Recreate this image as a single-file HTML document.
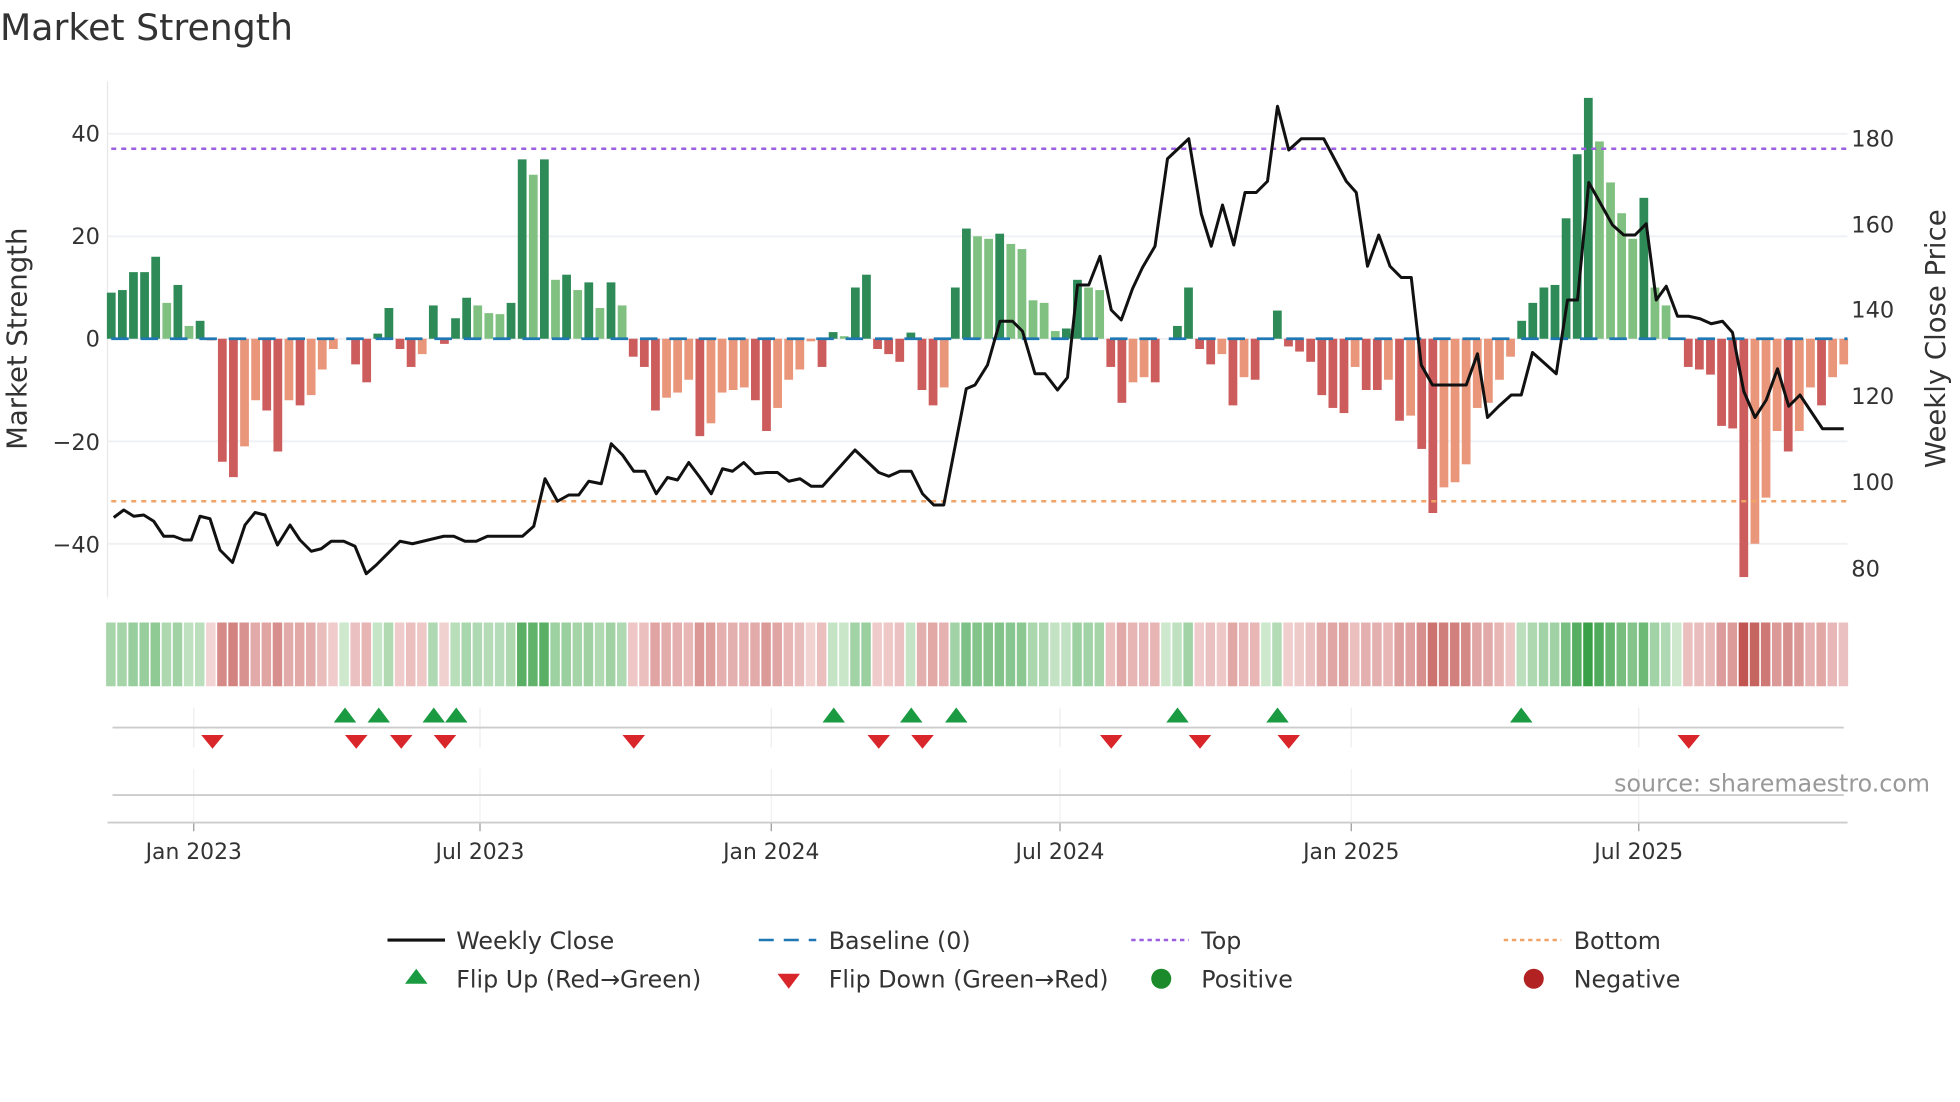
<!DOCTYPE html>
<html><head><meta charset="utf-8"><style>
html,body{margin:0;padding:0;background:#fff;}
svg{display:block;font-family:"DejaVu Sans","Liberation Sans",sans-serif;}
</style></head><body>
<svg id="s" width="1960" height="1102" viewBox="0 0 1568 881.6" xmlns="http://www.w3.org/2000/svg">
<rect width="1568" height="882" fill="#fff"/>
<text x="0" y="32" font-size="29" fill="#333">Market Strength</text>
<g id="grid"></g>
<g id="heat"></g>
<g id="bars"></g>
<g id="lines"></g>
<g id="marks"></g>
<g font-size="18" fill="#333" text-anchor="end">
<text x="80" y="113">40</text><text x="80" y="195">20</text><text x="80" y="277">0</text>
<text x="80" y="360">−20</text><text x="80" y="442">−40</text>
</g>
<g font-size="18" fill="#333">
<text x="1481" y="117">180</text><text x="1481" y="186">160</text><text x="1481" y="254">140</text>
<text x="1481" y="323">120</text><text x="1481" y="392">100</text><text x="1481" y="461">80</text>
</g>
<text transform="translate(21,271) rotate(-90)" font-size="22" fill="#333" text-anchor="middle">Market Strength</text>
<text transform="translate(1556,271) rotate(-90)" font-size="22" fill="#333" text-anchor="middle">Weekly Close Price</text>
<g font-size="17.5" fill="#333" text-anchor="middle">
<text x="155" y="687">Jan 2023</text><text x="384" y="687">Jul 2023</text><text x="617" y="687">Jan 2024</text>
<text x="848" y="687">Jul 2024</text><text x="1081" y="687">Jan 2025</text><text x="1311" y="687">Jul 2025</text>
</g>
<text x="1544" y="633" font-size="19" fill="#999" text-anchor="end">source: sharemaestro.com</text>
<g font-size="19" fill="#333">
<line x1="310" y1="752" x2="356" y2="752" stroke="#111" stroke-width="2.5"/>
<text x="365" y="759">Weekly Close</text>
<line x1="607" y1="752" x2="653" y2="752" stroke="#1f77b4" stroke-width="2" stroke-dasharray="12,8"/>
<text x="663" y="759">Baseline (0)</text>
<line x1="905" y1="752" x2="951" y2="752" stroke="#9c5fe0" stroke-width="2" stroke-dasharray="3.5,3"/>
<text x="961" y="759">Top</text>
<line x1="1203" y1="752" x2="1249" y2="752" stroke="#f0a468" stroke-width="2" stroke-dasharray="3.5,3"/>
<text x="1259" y="759">Bottom</text>
<polygon points="333,775 342,787 324,787" fill="#1a9a41"/>
<text x="365" y="790">Flip Up (Red→Green)</text>
<polygon points="622,779 640,779 631,791" fill="#d9262a"/>
<text x="663" y="790">Flip Down (Green→Red)</text>
<circle cx="929" cy="783" r="8" fill="#1a8a2a"/>
<text x="961" y="790">Positive</text>
<circle cx="1227" cy="783" r="8" fill="#b22222"/>
<text x="1259" y="790">Negative</text>
</g>
</svg>
<script>
var NS="http://www.w3.org/2000/svg";
function el(p,t,a){var e=document.createElementNS(NS,t);for(var k in a)e.setAttribute(k,a[k]);document.getElementById(p).appendChild(e);return e;}
var V=[9,9.5,13,13,16,7,10.5,2.5,3.5,-0.3,-24,-27,-21,-12,-14,-22,-12,-13,-11,-6,-2,0,-5,-8.5,1,6,-2,-5.5,-3,6.5,-1,4,8,6.5,5,4.8,7,35,32,35,11.5,12.5,9.5,11,6,11,6.5,-3.5,-5.5,-14,-11.5,-10.5,-8,-19,-16.5,-10.5,-10,-9.5,-12,-18,-13.5,-8,-6,-0.5,-5.5,1.3,0.5,10,12.5,-2,-3,-4.5,1.2,-10,-13,-9.5,10,21.5,20,19.5,20.5,18.5,17.5,7.5,7,1.5,2,11.5,10,9.5,-5.5,-12.5,-8.5,-7.5,-8.5,0,2.5,10,-2,-5,-3,-13,-7.5,-8,0,5.5,-1.5,-2.5,-4.5,-11,-13.5,-14.5,-5.5,-10,-10,-8,-16,-15,-21.5,-34,-29,-28,-24.5,-13.5,-12.5,-8,-3.5,3.5,7,10,10.5,23.5,36,47,38.5,30.5,24.5,19.5,27.5,10,6.5,0,-5.5,-6,-7,-17,-17.5,-46.5,-40,-31,-18,-22,-18,-9.5,-13,-7.5,-5];
var x0=89,dx=(1475-89)/(V.length-1),Y=function(v){return 271-v*4.1;};
el("grid","line",{x1:86,y1:65,x2:86,y2:478,stroke:"#e8e8e8","stroke-width":1});
[40,20,0,-20,-40].forEach(function(v){el("grid","line",{x1:86,y1:Y(v),x2:1478,y2:Y(v),stroke:"#eef0f4","stroke-width":1.5});});
[155,384,617,848,1081,1311].forEach(function(x){
 el("grid","line",{x1:x,y1:566,x2:x,y2:598,stroke:"#eee","stroke-width":1});
 el("grid","line",{x1:x,y1:615,x2:x,y2:657,stroke:"#f0f0f0","stroke-width":1});
 el("grid","line",{x1:x,y1:658,x2:x,y2:665,stroke:"#999","stroke-width":1});
});
el("grid","line",{x1:90,y1:582,x2:1475,y2:582,stroke:"#ccc","stroke-width":1.5});
el("grid","line",{x1:90,y1:636,x2:1475,y2:636,stroke:"#ccc","stroke-width":1.5});
el("grid","line",{x1:86,y1:658,x2:1478,y2:658,stroke:"#ccc","stroke-width":1.5});
function mix(a,b,t){return "rgb("+a.map(function(c,i){return Math.round(c+(b[i]-c)*t);}).join(",")+")";}
V.forEach(function(v,i){
 var x=x0+i*dx,prev=i?V[i-1]:0,col;
 if(v>=0){col=(v>=prev)?"#2e8b57":"#80c080";}else{col=(v<=prev)?"#cd5c5c":"#e9967a";}
 var y=Y(Math.max(v,0)),h=Math.abs(v)*4.1;
 if(h>0.3)el("bars","rect",{x:x-3.5,y:y,width:7,height:h,fill:col});
 var t=Math.min(Math.abs(v)/47,1),hc;
 if(v>=0)hc=mix([205,232,205],[58,160,72],Math.pow(t,0.8));else hc=mix([243,214,214],[192,84,80],Math.pow(t,0.8));
 el("heat","rect",{x:x-4.1,y:498,width:7.6,height:51,fill:hc});
});
el("lines","line",{x1:89,y1:271,x2:1478,y2:271,stroke:"#1f77b4","stroke-width":2.2,"stroke-dasharray":"14,9.5"});
el("lines","line",{x1:89,y1:119,x2:1478,y2:119,stroke:"#9c5fe0","stroke-width":2,"stroke-dasharray":"4,4"});
el("lines","line",{x1:89,y1:401,x2:1478,y2:401,stroke:"#f0a468","stroke-width":2,"stroke-dasharray":"4,4"});
var P="91,414 99,408 107,413 115,412 123,417 131,429 139,429 147,432 153,432 160,413 168,415 176,440 186,450 196,420 204,410 212,412 222,436 232,420 240,432 249,441 257,439 265,433 275,433 284,437 293,459 301,452 320,433 330,435 355,429 363,429 372,433 381,433 390,429 418,429 427,421 436,383 446,401 455,396 463,396 471,385 481,387 489,355 498,364 507,377 516,377 525,395 534,382 542,384 551,370 560,382 569,395 578,375 586,377 595,370 604,379 613,378 622,378 631,385 640,383 649,389 658,389 684,360 703,378 711,381 720,377 729,377 738,395 747,404 755,404 773,311 780,308 790,292 800,257 810,257 818,265 828,299 836,299 846,312 854,302 862,228 871,228 880,205 889,248 897,256 906,231 914,214 924,197 934,127 951,111 961,171 969,197 978,164 987,196 996,154 1005,154 1014,145 1022,85 1031,120 1041,111 1059,111 1077,145 1085,154 1094,213 1103,188 1112,213 1121,222 1129,222 1137,292 1146,308 1155,308 1173,308 1182,283 1190,334 1199,325 1209,316 1217,316 1226,282 1245,299 1254,240 1262,240 1271,146 1280,162 1290,180 1299,188 1308,188 1317,179 1325,240 1333,229 1342,253 1351,253 1360,255 1369,259 1378,257 1386,266 1395,313 1404,334 1413,320 1422,295 1431,325 1440,316 1458,343 1475,343";
el("lines","polyline",{points:P,fill:"none",stroke:"#111","stroke-width":2.4,"stroke-linejoin":"round"});
[276,303,347,365,667,729,765,942,1022,1217].forEach(function(x){el("marks","polygon",{points:x+",566 "+(x+9)+",578 "+(x-9)+",578",fill:"#1a9a41"});});
[170,285,321,356,507,703,738,889,960,1031,1351].forEach(function(x){el("marks","polygon",{points:(x-9)+",588 "+(x+9)+",588 "+x+",599",fill:"#d9262a"});});
</script>
</body></html>
